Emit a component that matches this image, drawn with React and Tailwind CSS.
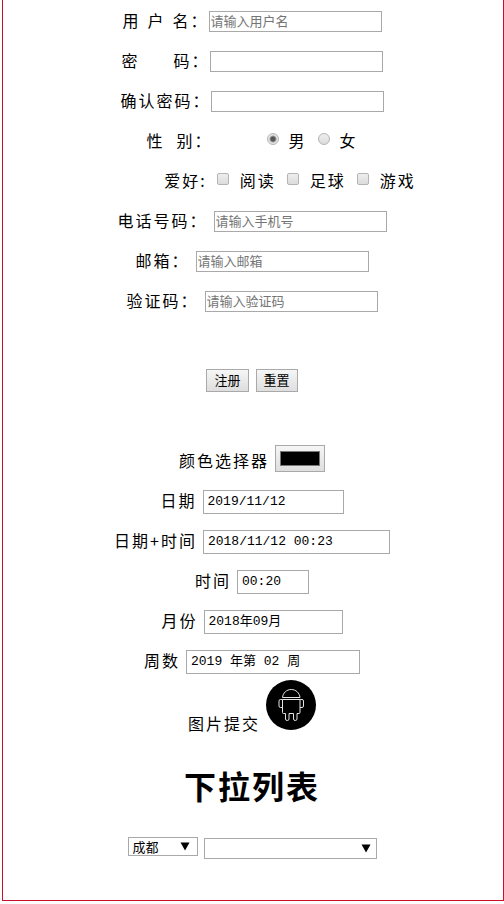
const inputClass = 'w-[173px] h-[21px] mt-0.5 px-px border border-[#a9a9a9] bg-white text-[13px] tracking-normal placeholder-[#757575]';
const dateClass = 'h-6 mt-1 px-1 border border-[#a9a9a9] bg-white text-[13px] tracking-normal font-["Liberation_Mono","Noto_Sans_CJK_SC",monospace]';
const buttonClass = 'h-[23px] px-[7px] border border-[#a9a9a9] bg-gradient-to-b from-[#f6f6f6] to-[#dedede] text-[13px] leading-5 tracking-normal';
const boxClass = 'appearance-none size-3 mb-0.5 border border-[#b4b4b4] bg-gradient-to-b from-[#eeeeee] to-[#dcdcdc]';

const Row = ({ children, className = '' }) => (
  <div className={`flex items-center justify-center h-10 ${className}`}>{children}</div>
);

const TextField = ({ id, label, type = 'text', placeholder, className = '' }) => (
  <Row className={className}>
    <label htmlFor={id}>{label}</label>
    <input id={id} type={type} placeholder={placeholder} className={inputClass} />
  </Row>
);

const DateField = ({ id, label, value, width }) => (
  <Row className="gap-1.5">
    <label htmlFor={id}>{label}</label>
    <input id={id} type="text" defaultValue={value} className={`${dateClass} ${width}`} />
  </Row>
);

const Arrow = ({ className }) => (
  <svg viewBox="0 0 10 9" className={`absolute pointer-events-none w-2.5 h-[9px] ${className}`}>
    <path d="M0.5 0.5h9L5 8.5z" fill="#000" />
  </svg>
);

const AndroidIcon = () => (
  <svg viewBox="0 0 50 50" className="block size-[50px]" fill="none" stroke="#e4e4e4" strokeWidth="1">
    <circle cx="25" cy="25" r="25" fill="#000" stroke="none" />
    <path d="M16.5 17.5c0.500-4.500 4-8 8.750-8s8.250 3.500 8.750 8z" />
    <path d="M16.500 19.500h17.500v13q0 1-1 1h-2v5.500q0 1.500-1.750 1.500t-1.750-1.500v-5.500h-4.500v5.500q0 1.500-1.750 1.500t-1.750-1.500v-5.500h-2q-1 0-1-1z" />
    <path d="M16.500 19.500h-2q-1.500 0-1.500 1.500v5q0 1.500 1.500 1.500h2M34 19.500h2q1.500 0 1.500 1.500v5q0 1.500-1.500 1.500h-2" />
  </svg>
);

const genders = [
  { id: 'male', label: '男' },
  { id: 'female', label: '女' },
];

const hobbies = [
  { id: 'read', label: '阅读' },
  { id: 'football', label: '足球' },
  { id: 'game', label: '游戏' },
];

const App = () => {
  return (
    <form
      onSubmit={e => e.preventDefault()}
      className='ml-0.5 pr-0.5 pb-[41px] border-x border-b border-[#c8102e] bg-white text-black text-base leading-6 tracking-[2px] font-["Noto_Sans_CJK_SC",sans-serif]'
    >
      <TextField
        id="username"
        label={<span className="flex gap-[7px]"><span>用</span><span>户</span><span>名：</span></span>}
        placeholder="请输入用户名"
      />
      <TextField id="password" type="password" label={<span className="flex gap-[34px]"><span>密</span><span>码：</span></span>} />
      <TextField id="confirm" type="password" label="确认密码：" />

      {/* Gender */}
      <Row>
        <span className="flex gap-3 mr-[54px]"><span>性</span><span>别：</span></span>
        {genders.map(g => (
          <div key={g.id} className="flex items-center not-last:mr-[11px]">
            <input
              id={g.id}
              type="radio"
              name="gender"
              defaultChecked={g.id === 'male'}
              className={`${boxClass} rounded-full mr-2.5 checked:bg-[radial-gradient(circle,#555_2px,#e6e6e6_4px)]`}
            />
            <label htmlFor={g.id}>{g.label}</label>
          </div>
        ))}
      </Row>

      {/* Hobbies */}
      <Row className="pl-[76px]">
        <span className="mr-2.5">爱好:</span>
        {hobbies.map(h => (
          <div key={h.id} className="flex items-center not-last:mr-[11px]">
            <input id={h.id} type="checkbox" className={`${boxClass} rounded-xs mr-[11px] checked:from-[#888] checked:to-[#666]`} />
            <label htmlFor={h.id}>{h.label}</label>
          </div>
        ))}
      </Row>

      <TextField id="phone" type="tel" label="电话号码：" placeholder="请输入手机号" className="gap-1.5" />
      <TextField id="email" type="email" label="邮箱：" placeholder="请输入邮箱" className="gap-1.5" />
      <TextField id="code" label="验证码：" placeholder="请输入验证码" className="gap-1.5" />

      <Row className="gap-[7px] my-10">
        <button type="submit" className={buttonClass}>注册</button>
        <button type="reset" className={buttonClass}>重置</button>
      </Row>

      <Row className="gap-1.5">
        <label htmlFor="color">颜色选择器</label>
        <input
          id="color"
          type="color"
          defaultValue="#000000"
          className="appearance-none w-[50px] h-[27px] mb-1 px-1 py-[5px] border border-[#a9a9a9] bg-gradient-to-b from-[#f6f6f6] to-[#dedede] [&::-webkit-color-swatch-wrapper]:p-0 [&::-webkit-color-swatch]:rounded-none [&::-webkit-color-swatch]:border-[#777]"
        />
      </Row>
      <DateField id="date" label="日期" value="2019/11/12" width="w-[141px]" />
      <DateField id="datetime" label="日期+时间" value="2018/11/12 00:23" width="w-[187px]" />
      <DateField id="time" label="时间" value="00:20" width="w-[72px]" />
      <DateField id="month" label="月份" value="2018年09月" width="w-[139px]" />
      <DateField id="week" label="周数" value="2019 年第 02 周" width="w-[174px]" />

      <div className="flex items-baseline justify-center gap-1.5">
        <span>图片提交</span>
        <button type="submit" aria-label="图片提交" className="rounded-full">
          <AndroidIcon />
        </button>
      </div>

      <h1 className="mt-[26px] mb-7 text-center text-[32px] leading-[48px] font-bold">下拉列表</h1>

      <div className="flex items-start justify-center gap-1.5">
        <div className="relative">
          <select aria-label="城市" className="block appearance-none w-[70px] h-[19px] px-1 border border-[#a9a9a9] bg-white text-[13px] leading-4 tracking-normal">
            <option>成都</option>
          </select>
          <Arrow className="right-2 top-[5px]" />
        </div>
        <div className="relative pt-px">
          <select aria-label="列表" className="block appearance-none w-[173px] h-[21px] px-1 border border-[#a9a9a9] bg-white text-[13px] leading-4 tracking-normal">
            <option></option>
          </select>
          <Arrow className="right-1.5 top-[7px]" />
        </div>
      </div>
    </form>
  );
};

export default App;
